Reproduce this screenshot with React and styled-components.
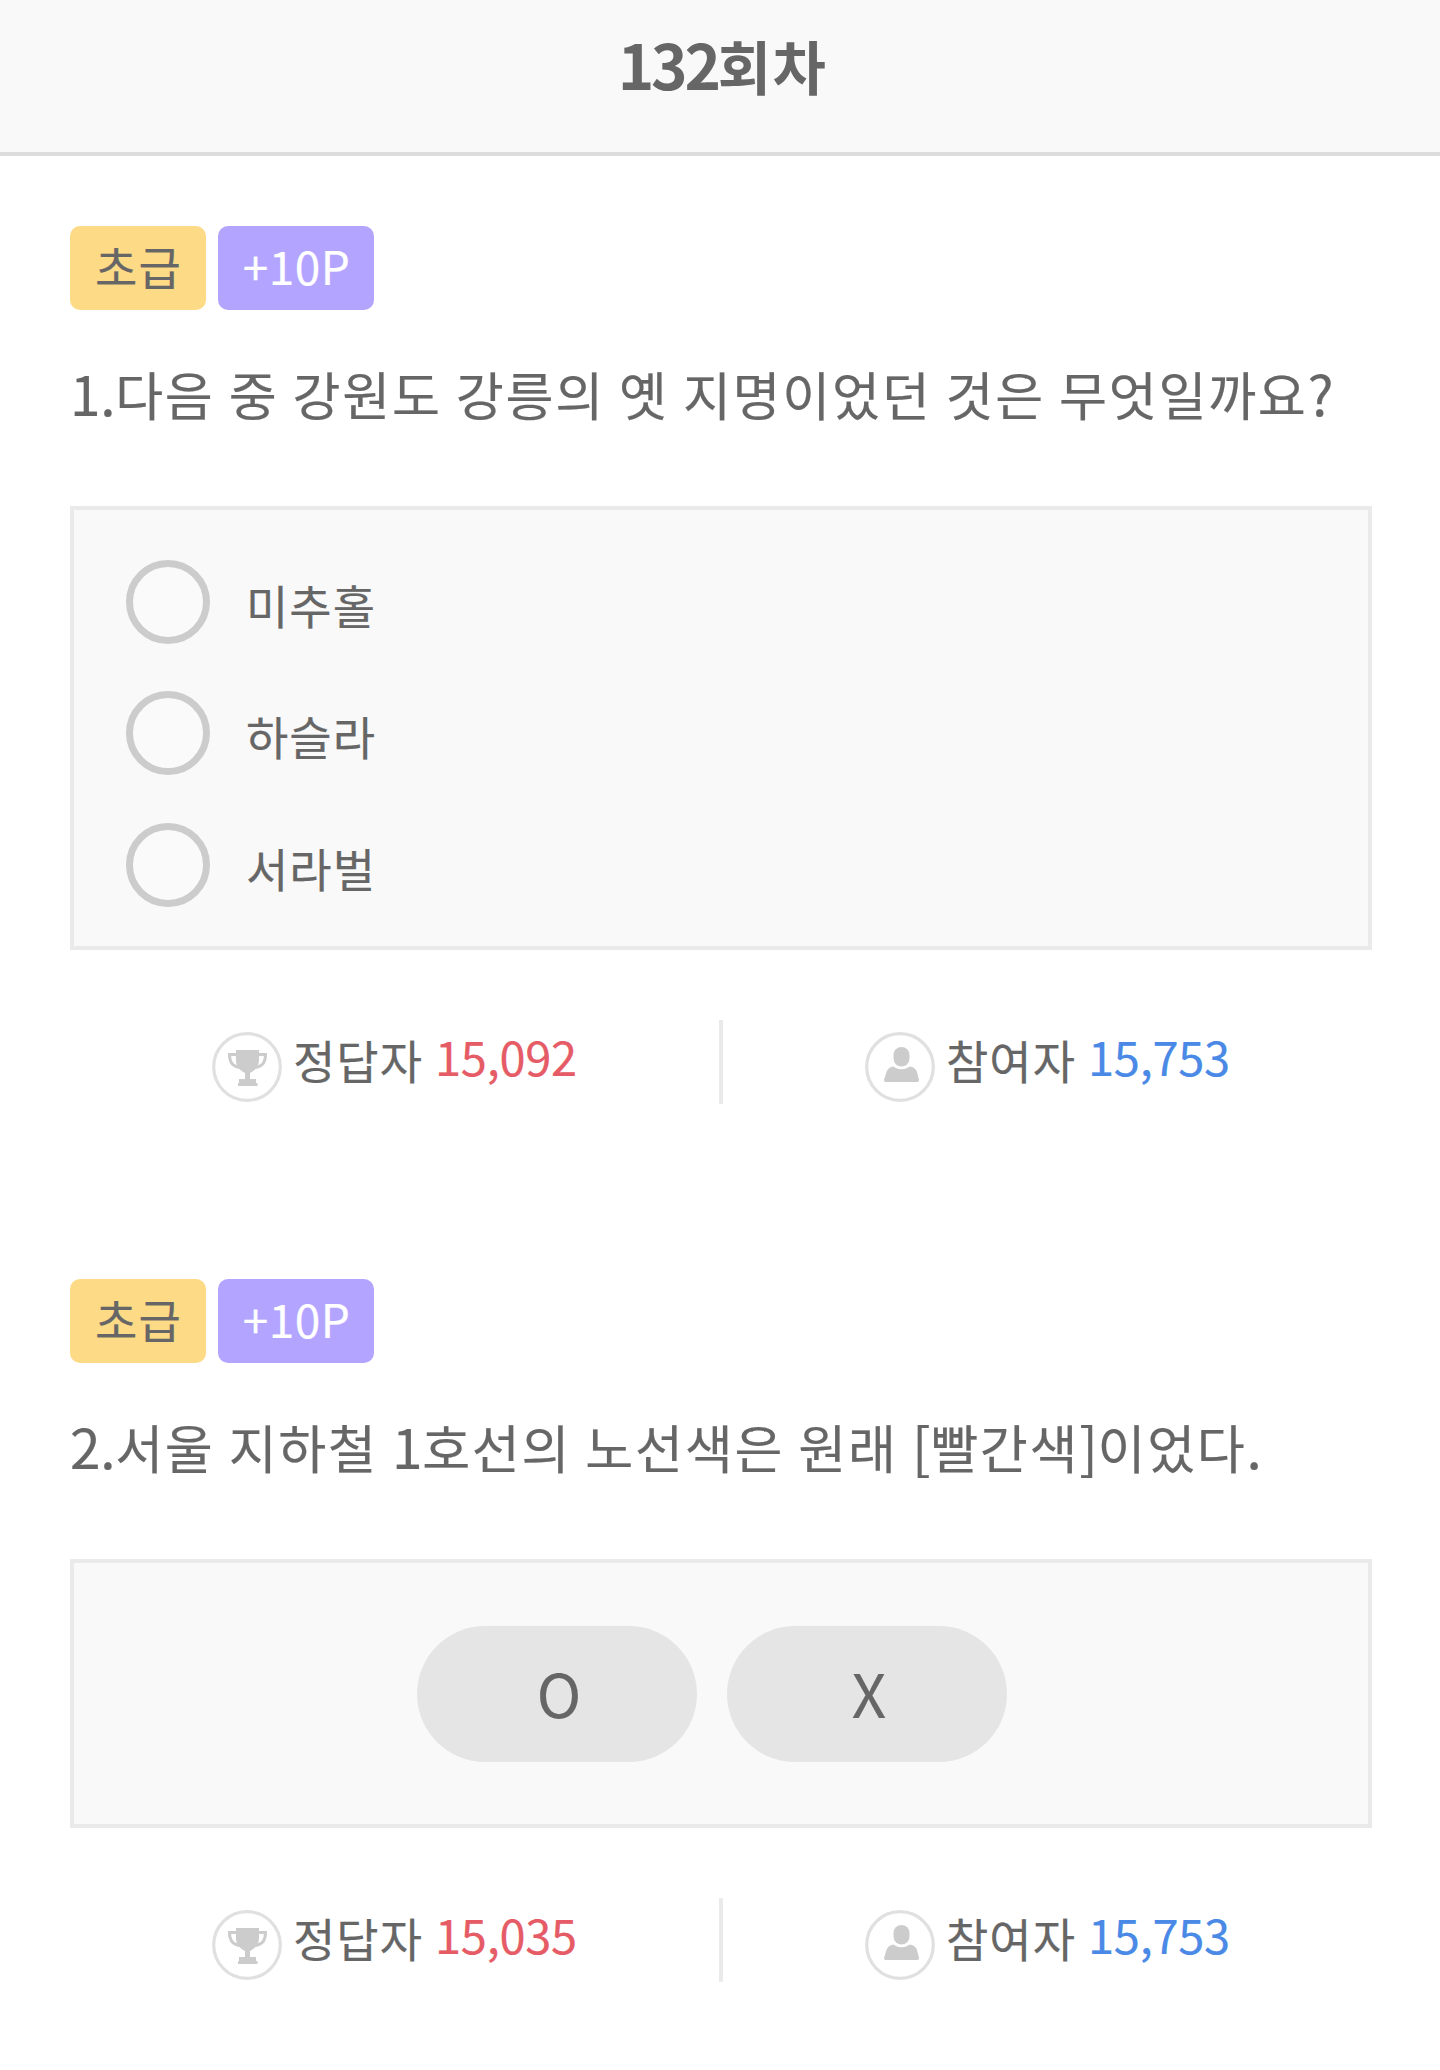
import React from 'react';
import styled, { createGlobalStyle } from 'styled-components';

const GlobalStyle = createGlobalStyle`
  * {
    box-sizing: border-box;
  }
  body {
    margin: 0;
    background-color: #fff;
    color: #666;
    font-family: 'Noto Sans CJK KR', sans-serif;
  }
`;

const Header = styled.header`
  display: flex;
  justify-content: center;
  height: 156px;
  padding: 17px 0 0 5px;
  background-color: #f9f9f9;
  border-bottom: 4px solid #ddd;
`;

const Title = styled.h1`
  margin: 0;
  font-size: 58px;
  font-weight: 700;
  line-height: 92px;
  letter-spacing: 1.4px;
`;

const Latin = styled.span`
  font-size: ${props => props.$size}px;
  letter-spacing: ${props => props.$spacing}px;
`;

const QuizList = styled.main`
  padding: 70px 68px 0 70px;
  -webkit-text-stroke: 0.2px;
`;

const Quiz = styled.section`
  margin-bottom: 175px;
`;

const Badges = styled.div`
  display: flex;
  gap: 12px;
`;

const Badge = styled.span`
  height: 84px;
  width: ${props => props.$width}px;
  padding-left: 1px;
  border-radius: 10px;
  background-color: ${props => props.$bg};
  color: ${props => props.$color};
  font-size: 46px;
  line-height: 79px;
  letter-spacing: ${props => props.$spacing}px;
  text-align: center;
`;

const Question = styled.p`
  height: 80px;
  margin: 42px 0 74px;
  font-size: 52.2px;
  line-height: 80px;
  letter-spacing: 1.68px;
  word-spacing: 0.8px;
  white-space: nowrap;
`;

const AnswerBox = styled.div`
  border: 4px solid #eaeaea;
  background-color: #f9f9f9;
`;

const OptionList = styled(AnswerBox)`
  display: flex;
  flex-direction: column;
  height: 444px;
  padding: 50px 52px 0;
`;

const Option = styled.label`
  display: flex;
  align-items: center;
  gap: 36px;
  height: 84px;
  margin-bottom: 47px;
  font-size: 46px;
  line-height: 84px;
  letter-spacing: 1px;
  & + & {
    margin-bottom: 48px;
  }
`;

const Radio = styled.span`
  width: 84px;
  height: 84px;
  border: 7px solid #ccc;
  border-radius: 50%;
  background-color: #fafafa;
`;

const OptionText = styled.span`
  padding-top: 3px;
`;

const OxBox = styled(AnswerBox)`
  display: flex;
  gap: 30px;
  height: 269px;
  padding: 63px 0 0 343px;
`;

const OxButton = styled.button`
  width: 280px;
  height: 136px;
  padding: 0 0 4px 4px;
  border: 0;
  border-radius: 68px;
  background-color: #e5e5e5;
  color: #666;
  font-family: inherit;
  font-size: 60px;
  line-height: 88px;
`;

const Stats = styled.div`
  display: grid;
  grid-template-columns: 649px 4px 649px;
  height: 84px;
  margin-top: 70px;
`;

const Divider = styled.span`
  background-color: #eaeaea;
`;

const Stat = styled.div`
  display: flex;
  padding: 12px 0 0 142px;
`;

const StatLabel = styled.span`
  margin: -9px 0 0 11px;
  font-size: 46px;
  line-height: 72px;
  letter-spacing: 1px;
`;

const Count = styled.span`
  margin: -12px 0 0 12px;
  font-size: 47px;
  line-height: 72px;
  letter-spacing: -0.25px;
  color: ${props => props.$color};
`;

const TrophyIcon = () => (
  <svg width="70" height="70" viewBox="0 0 70 70">
    <circle cx="35" cy="35" r="33.3" fill="none" stroke="#e0e0e0" strokeWidth="3.2" />
    <path
      d="M25 22.500H17.500C17.500 30 20 34.500 28 35.500M46 22.500H53.500C53.500 30 51 34.500 43 35.500"
      fill="none"
      stroke="#ccc"
      strokeWidth="3"
    />
    <path
      d="M24 18H47V28C47 34 44 38 38 41V47H44V51H45.500V54H26V51H27V47H33V41C27 38 24 34 24 28Z"
      fill="#ccc"
    />
  </svg>
);

const PersonIcon = () => (
  <svg width="70" height="70" viewBox="0 0 70 70">
    <circle cx="35" cy="35" r="33.3" fill="none" stroke="#e0e0e0" strokeWidth="3.2" />
    <rect x="28.500" y="15" width="16" height="19.500" rx="8" fill="#ccc" />
    <path
      d="M28 34.500Q36.500 40 45 34.500C49 35.500 51 37 52 40L54 48Q54 50 52.500 50H20.500Q19 50 19 48L21.500 40C23 37 24 35.500 28 34.500Z"
      fill="#ccc"
    />
    <path d="M28.500 33.500Q36.500 39 44.500 33.500" fill="none" stroke="#fff" strokeWidth="1.2" />
  </svg>
);

// digits and punctuation run a little larger than the hangul around them
const MixedText = ({ text, size, spacing }) =>
  text.split(/([!-~]+)/).map((part, index) =>
    index % 2 ? (
      <Latin key={index} $size={size} $spacing={spacing}>
        {part}
      </Latin>
    ) : (
      part
    )
  );

const quizzes = [
  {
    id: 1,
    question: '1.다음 중 강원도 강릉의 옛 지명이었던 것은 무엇일까요?',
    options: ['미추홀', '하슬라', '서라벌'],
    correct: '15,092',
    joined: '15,753',
  },
  {
    id: 2,
    question: '2.서울 지하철 1호선의 노선색은 원래 [빨간색]이었다.',
    correct: '15,035',
    joined: '15,753',
  },
];

const QuizItem = ({ quiz }) => (
  <Quiz>
    <Badges>
      <Badge $width={136} $spacing={1.2} $bg="#fdda86" $color="#666">
        초급
      </Badge>
      <Badge $width={156} $spacing={0.4} $bg="#b3a5ff" $color="#fff">
        +10P
      </Badge>
    </Badges>
    <Question>
      <MixedText text={quiz.question} size={55} spacing={-0.35} />
    </Question>
    {quiz.options ? (
      <OptionList>
        {quiz.options.map(option => (
          <Option key={option}>
            <Radio />
            <OptionText>{option}</OptionText>
          </Option>
        ))}
      </OptionList>
    ) : (
      <OxBox>
        <OxButton>O</OxButton>
        <OxButton>X</OxButton>
      </OxBox>
    )}
    <Stats>
      <Stat>
        <TrophyIcon />
        <StatLabel>정답자</StatLabel>
        <Count $color="#e65c66">{quiz.correct}</Count>
      </Stat>
      <Divider />
      <Stat>
        <PersonIcon />
        <StatLabel>참여자</StatLabel>
        <Count $color="#4a8ae6">{quiz.joined}</Count>
      </Stat>
    </Stats>
  </Quiz>
);

const App = () => (
  <>
    <GlobalStyle />
    <Header>
      <Title>
        <MixedText text="132회차" size={62} spacing={-3.2} />
      </Title>
    </Header>
    <QuizList>
      {quizzes.map(quiz => (
        <QuizItem key={quiz.id} quiz={quiz} />
      ))}
    </QuizList>
  </>
);

export default App;
